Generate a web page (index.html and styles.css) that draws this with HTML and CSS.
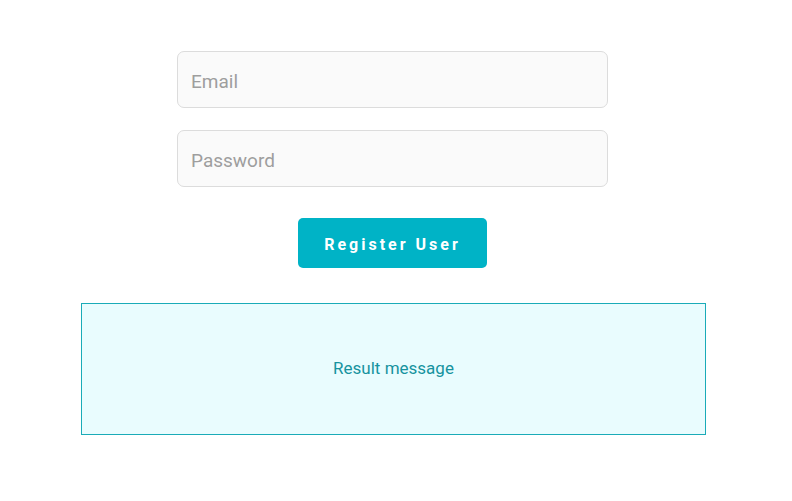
FILE: index.html
```html
<!DOCTYPE html>
<html>
<head>
<meta charset="utf-8">
<link rel="stylesheet" href="styles.css">
</head>
<body>
<main class="page">
  <form class="form">
    <input class="field" type="email" placeholder="Email">
    <input class="field" type="password" placeholder="Password">
    <button class="btn" type="button">Register User</button>
  </form>
  <div class="result">Result message</div>
</main>
</body>
</html>
```
FILE: styles.css
```css
* { box-sizing: border-box; }
html, body { margin: 0; padding: 0; background: #fff; }
body { font-family: Roboto, "Noto Sans", sans-serif; }
.page {
  width: 785px;
  padding-top: 51px;
  display: flex;
  flex-direction: column;
  align-items: center;
}
.form {
  display: flex;
  flex-direction: column;
  align-items: center;
  gap: 22px;
}
.field {
  width: 431px;
  height: 57px;
  border: 1px solid #dcdcdc;
  border-radius: 7px;
  background: #fafafa;
  padding: 3px 13px 0;
  font-family: Roboto, sans-serif;
  font-size: 19px;
  color: #333;
  outline: none;
}
.field::placeholder { color: #9e9e9e; }
.btn {
  margin-top: 9px;
  width: 189px;
  height: 50px;
  border: none;
  border-radius: 5px;
  background: #00b3c6;
  color: #fff;
  font-family: Roboto, sans-serif;
  font-weight: 700;
  font-size: 16px;
  letter-spacing: 3px;
  padding: 2px 0 0 0;
}
.result {
  margin-top: 35px;
  margin-left: 2px;
  width: 625px;
  height: 132px;
  border: 1px solid #1aabb8;
  background: #e9fcfe;
  color: #16939f;
  font-size: 17px;
  padding-bottom: 2px;
  display: flex;
  align-items: center;
  justify-content: center;
}
```
